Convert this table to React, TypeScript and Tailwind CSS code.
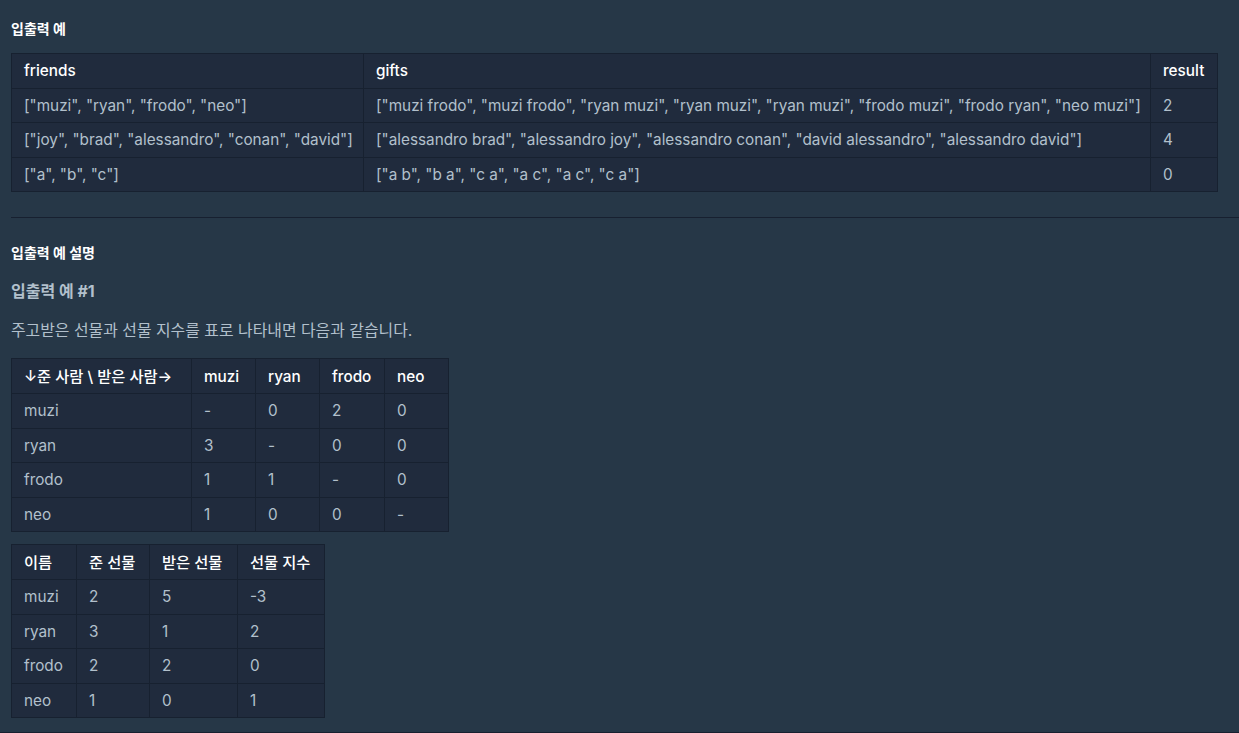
import React from "react";

const FONT = 'Inter, "Noto Sans CJK KR", sans-serif';

type Table = { head: string[]; rows: string[][]; widths: number[] };

const examples: Table = {
  head: ["friends", "gifts", "result"],
  widths: [352, 787, 67],
  rows: [
    ['["muzi", "ryan", "frodo", "neo"]', '["muzi frodo", "muzi frodo", "ryan muzi", "ryan muzi", "ryan muzi", "frodo muzi", "frodo ryan", "neo muzi"]', "2"],
    ['["joy", "brad", "alessandro", "conan", "david"]', '["alessandro brad", "alessandro joy", "alessandro conan", "david alessandro", "alessandro david"]', "4"],
    ['["a", "b", "c"]', '["a b", "b a", "c a", "a c", "a c", "c a"]', "0"],
  ],
};

const giftMatrix: Table = {
  head: ["↓준 사람 \\ 받은 사람→", "muzi", "ryan", "frodo", "neo"],
  widths: [180, 64, 64, 65, 64],
  rows: [
    ["muzi", "-", "0", "2", "0"],
    ["ryan", "3", "-", "0", "0"],
    ["frodo", "1", "1", "-", "0"],
    ["neo", "1", "0", "0", "-"],
  ],
};

const giftIndex: Table = {
  head: ["이름", "준 선물", "받은 선물", "선물 지수"],
  widths: [65, 73, 88, 87],
  rows: [
    ["muzi", "2", "5", "-3"],
    ["ryan", "3", "1", "2"],
    ["frodo", "2", "2", "0"],
    ["neo", "1", "0", "1"],
  ],
};

function DataTable({ t }: { t: Table }) {
  const total = t.widths.reduce((a, b) => a + b, 0);
  return (
    <table
      className="table-fixed border-collapse bg-[#202b3d] text-[15.3px] leading-[19px]"
      style={{ width: total }}
    >
      <colgroup>
        {t.widths.map((w, i) => (
          <col key={i} style={{ width: w }} />
        ))}
      </colgroup>
      <thead>
        <tr className="h-[34.6px]">
          {t.head.map((h) => (
            <th
              key={h}
              className="whitespace-nowrap border border-[#172130] px-3 text-left font-medium text-white"
            >
              {h}
            </th>
          ))}
        </tr>
      </thead>
      <tbody>
        {t.rows.map((r, i) => (
          <tr key={i} className="h-[34.6px]">
            {r.map((c, j) => (
              <td
                key={j}
                className="whitespace-nowrap border border-[#172130] px-3 text-left text-[#b2c0cc]"
              >
                {c}
              </td>
            ))}
          </tr>
        ))}
      </tbody>
    </table>
  );
}

export default function App() {
  return (
    <div
      className="h-[733px] w-[1239px] overflow-hidden border-b border-[#172030] bg-[#263747]"
      style={{ fontFamily: FONT }}
    >
      <div className="pl-[11px] pt-[19px]">
        <h5 className="text-[14px] font-bold leading-[20px] text-white">입출력 예</h5>
        <div className="mt-[14px]">
          <DataTable t={examples} />
        </div>
        <hr className="mt-[25px] border-t border-[#172030]" />
        <h5 className="mt-[25px] text-[14px] font-bold leading-[20px] text-white">입출력 예 설명</h5>
        <h6 className="mt-[18px] text-[16px] font-bold leading-[20px] text-[#b2c0cc]">입출력 예 #1</h6>
        <p className="mt-[20px] text-[15.9px] leading-[20px] text-[#b2c0cc]">
          주고받은 선물과 선물 지수를 표로 나타내면 다음과 같습니다.
        </p>
        <div className="mt-[17px]">
          <DataTable t={giftMatrix} />
        </div>
        <div className="mt-[12px]">
          <DataTable t={giftIndex} />
        </div>
      </div>
    </div>
  );
}
